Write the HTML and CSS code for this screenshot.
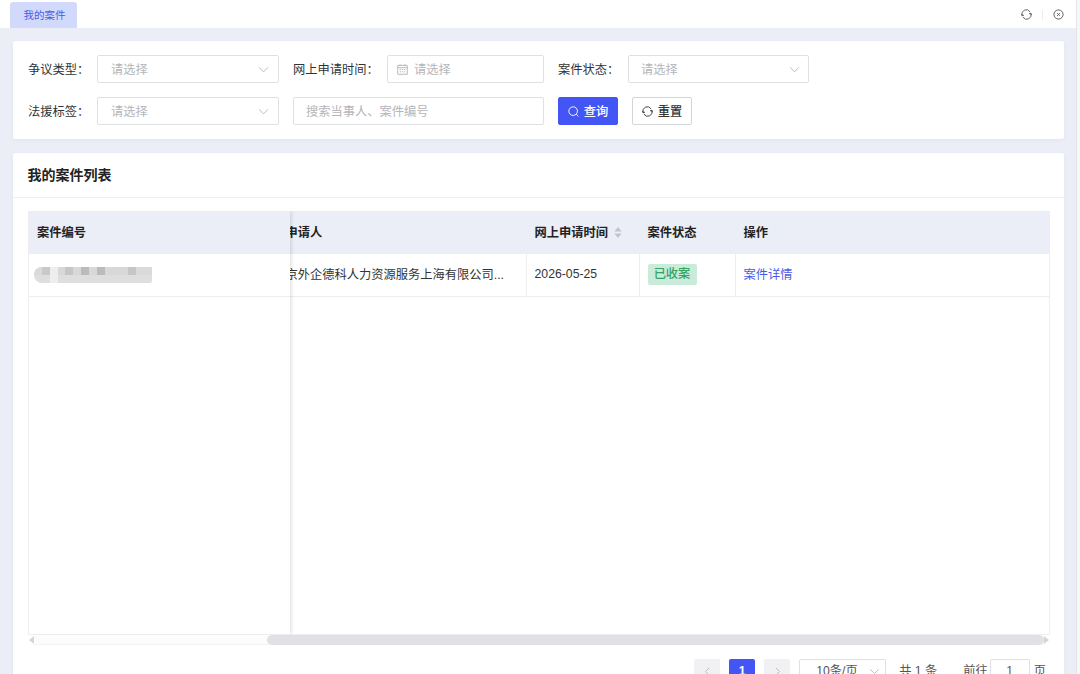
FILE: index.html
```html
<!DOCTYPE html>
<html lang="zh-CN">
<head>
  <meta charset="UTF-8" />
  <title>我的案件</title>
  <link rel="stylesheet" href="styles.css">
</head>
<body>

  <div class="app">
    <header class="tabs-bar">
      <a class="tab">我的案件</a>
      <div class="tab-tools">
        <svg class="icon-tool" viewBox="0 0 12 12"><path d="M1.3 7.4A4.8 4.8 0 0 1 9.9 3.2M10.7 4.6A4.8 4.8 0 0 1 2.1 8.8M.6 5.4l.7 2 1.9-.7M11.4 6.6l-.7-2-1.9.7" /></svg>
        <span class="divider"></span>
        <svg class="icon-tool" viewBox="0 0 12 12"><circle cx="6" cy="6" r="5" /><path d="M4.5 4.5l3 3M7.5 4.5l-3 3" /></svg>
      </div>
    </header>

    <main>
      <form class="card filter">
        <div class="filter-row">
          <div class="field">
            <label>争议类型：</label>
            <div class="control select">请选择<svg class="arrow" viewBox="0 0 12 12"><path d="M1.2 3.6L6 8.6l4.8-5" /></svg></div>
          </div>
          <div class="field">
            <label class="label-wide">网上申请时间：</label>
            <div class="control date">
              <svg class="calendar" viewBox="0 0 12 12"><path d="M.8 1.5h10.4v9.7H.8zM.8 4h10.4M3.4.3v2M8.6.3v2M3 6h1.4M5.3 6h1.4M7.6 6H9M3 8.5h1.4M5.3 8.5h1.4M7.6 8.5H9" /></svg>请选择
            </div>
          </div>
          <div class="field">
            <label>案件状态：</label>
            <div class="control select">请选择<svg class="arrow" viewBox="0 0 12 12"><path d="M1.2 3.6L6 8.6l4.8-5" /></svg></div>
          </div>
        </div>
        <div class="filter-row">
          <div class="field">
            <label>法援标签：</label>
            <div class="control select">请选择<svg class="arrow" viewBox="0 0 12 12"><path d="M1.2 3.6L6 8.6l4.8-5" /></svg></div>
          </div>
          <input class="control search" type="text" placeholder="搜索当事人、案件编号" />
          <button type="button" class="btn btn-primary">
            <svg viewBox="0 0 12 12"><circle cx="5.6" cy="5.6" r="4.7" /><path d="M9 9l2.4 2.4" /></svg>查询
          </button>
          <button type="button" class="btn btn-reset">
            <svg viewBox="0 0 12 12"><path d="M1.3 7.4A4.8 4.8 0 0 1 9.9 3.2M10.7 4.6A4.8 4.8 0 0 1 2.1 8.8M.6 5.4l.7 2 1.9-.7M11.4 6.6l-.7-2-1.9.7" /></svg>重置
          </button>
        </div>
      </form>

      <section class="card list">
        <h2>我的案件列表</h2>

        <div class="table">
          <div class="col col-no">
            <div class="th">案件编号</div>
            <div class="td">
              <div class="mask">
                <i class="m3"></i><i class="m1"></i><i class="m4"></i><i class="m2"></i><i class="m4"></i><i class="m2"></i><i class="m5"></i><i class="m2"></i><i class="m5"></i><i class="m2"></i><i class="m2"></i><i class="m2"></i><i class="m4"></i><i class="m3"></i><i class="m3"></i>
              </div>
            </div>
          </div>
          <div class="col">
            <div class="th scrolled">申请人</div>
            <div class="td scrolled">京外企德科人力资源服务上海有限公司...</div>
          </div>
          <div class="col">
            <div class="th">网上申请时间
              <svg class="sort" viewBox="0 0 8 12"><path d="M4 0l4 4.8H0zM4 12l4-4.8H0z" /></svg>
            </div>
            <div class="td">2026-05-25</div>
          </div>
          <div class="col">
            <div class="th">案件状态</div>
            <div class="td"><span class="tag">已收案</span></div>
          </div>
          <div class="col">
            <div class="th">操作</div>
            <div class="td"><a class="link">案件详情</a></div>
          </div>
        </div>

        <div class="scrollbar">
          <svg viewBox="0 0 5 8"><path d="M5 0v8L0 4z" /></svg>
          <div class="track"><div class="thumb"></div></div>
          <svg viewBox="0 0 5 8"><path d="M0 0v8l5-4z" /></svg>
        </div>

        <div class="pagination">
          <button class="page"><svg viewBox="0 0 12 12"><path d="M7.8 2L3.8 6l4 4" /></svg></button>
          <button class="page active">1</button>
          <button class="page"><svg viewBox="0 0 12 12"><path d="M4.2 2l4 4-4 4" /></svg></button>
          <div class="page-size">10条/页<svg viewBox="0 0 12 12"><path d="M1.5 3.8L6 8.3l4.5-4.5" /></svg></div>
          <span class="total">共 1 条</span>
          <span class="jump">前往<input type="text" value="1" />页</span>
        </div>
      </section>
    </main>
  </div>

</body>
</html>
```
FILE: styles.css
```css
* {
  box-sizing: border-box;
}
body {
  margin: 0;
  height: 100vh;
  overflow: hidden;
  background: #f6f7f8;
  color: #333;
  font-family: "Liberation Sans", "Noto Sans CJK SC", sans-serif;
  font-size: 12.25px;
}
svg {
  fill: none;
  stroke: currentColor;
  flex-shrink: 0;
}
input,
button {
  font: inherit;
}
.app {
  width: 1077px;
  height: 100vh;
  overflow: hidden;
  background: #ebeef6;
  border-right: 1px solid #e4e6ea;
}

/* tabs */
.tabs-bar {
  display: flex;
  justify-content: space-between;
  height: 28px;
  padding: 2px 12px 0 10px;
  background: #fff;
}
.tab {
  width: 67px;
  height: 26px;
  line-height: 26px;
  text-align: center;
  font-size: 10.5px;
  color: #4a5be8;
  background: #d2dafb;
  border-radius: 3px 3px 0 0;
  padding-left: 2px;
}
.tab-tools {
  display: flex;
  align-items: center;
  gap: 10px;
  padding-bottom: 1px;
  color: #555;
}
.icon-tool {
  width: 11px;
  height: 11px;
}
.divider {
  width: 1px;
  height: 10px;
  background: #eee;
}

main {
  padding: 13px 12px 0 13px;
}
.card {
  background: #fff;
  border-radius: 2px;
  box-shadow: 0 1px 4px rgba(0, 0, 0, 0.04);
}

/* filter */
.filter {
  height: 98px;
  padding: 14px 15px;
  margin-bottom: 14px;
}
.filter-row {
  display: flex;
  gap: 14px;
  margin-bottom: 14px;
}
.field {
  display: flex;
  align-items: center;
}
.field label {
  width: 69px;
  white-space: nowrap;
}
.field:nth-child(3) label {
  width: 70px;
}
.field .label-wide {
  width: 94px;
}
.control {
  display: flex;
  align-items: center;
  height: 28px;
  border: 1px solid #dfe0e3;
  border-radius: 2px;
  color: #b4b6ba;
  background: #fff;
}
.select {
  width: 182px;
  justify-content: space-between;
  padding: 0 9px 0 13px;
}
.field:nth-child(3) .select {
  width: 181px;
  padding: 0 8px 0 12px;
}
.arrow {
  width: 11px;
  height: 11px;
}
.date {
  width: 157px;
  padding-left: 9px;
}
.calendar {
  width: 11px;
  height: 11px;
  margin-right: 6px;
}
.search {
  width: 251px;
  padding: 1px 12px 0;
}
.search::placeholder {
  color: #b4b6ba;
}
.btn {
  display: flex;
  align-items: center;
  justify-content: center;
  gap: 5px;
  width: 60px;
  height: 28px;
  padding: 0;
  border-radius: 2px;
  font-weight: 500;
}
.btn svg {
  width: 11px;
  height: 11px;
}
.btn-primary {
  border: 1px solid #4356f5;
  background: #4356f5;
  color: #fff;
}
.btn-reset {
  border: 1px solid #d4d5d8;
  background: #fff;
  color: #333;
}

/* list */
.list {
  height: 560px;
}
.list h2 {
  height: 45px;
  line-height: 44px;
  margin: 0;
  padding-left: 14.5px;
  font-size: 14px;
  color: #222;
  border-bottom: 1px solid #eeeff1;
}
.table {
  display: grid;
  grid-template-columns: 261px 236.5px 113px 96px 1fr;
  height: 424px;
  margin: 13px 14px 0 15px;
  overflow: hidden;
  border: solid #edeef1;
  border-width: 0 1px 1px 1px;
}
.col-no {
  z-index: 1;
  background: #fff;
  box-shadow: 1px 0 4px rgba(0, 0, 0, 0.15);
}
.th,
.td {
  display: flex;
  align-items: center;
  height: 43px;
  padding: 0 0 1px 8px;
  white-space: nowrap;
}
.th {
  font-weight: bold;
  color: #222;
  background: #ebeef6;
}
.td {
  height: 42.5px;
  border: solid #edeef1;
  border-width: 0 1px 1px 0;
}
.col:last-child .td,
.col-no .td {
  border-right: 0;
}
.col-no .td {
  padding-left: 5px;
}
.col .scrolled {
  padding-left: 0;
  text-indent: -4.5px;
}
.sort {
  width: 8px;
  height: 11px;
  margin-left: 6px;
  fill: #c0c4cc;
  stroke: none;
}
.mask {
  display: flex;
  width: 118px;
  height: 16px;
  margin-top: 2px;
  border-radius: 8px 0 2px 8px;
  overflow: hidden;
  background: #dedede;
}
.mask i {
  flex: 1;
  height: 8px;
}
.m1 {
  background: #c9c9c9;
}
.m2 {
  background: #d8d8d8;
}
.m3 {
  background: #dadade;
}
.m4 {
  background: #c6c6c6;
}
.m5 {
  background: #bbb;
}
.mask i:nth-child(3) {
  height: 16px;
  background: #eee;
}
.tag {
  width: 49px;
  height: 21px;
  line-height: 21px;
  text-align: center;
  font-weight: 500;
  color: #35a266;
  background: #c8ecd9;
  border-radius: 2px;
}
.link {
  color: #4a5be8;
}

/* horizontal scrollbar */
.scrollbar {
  display: flex;
  align-items: center;
  height: 10px;
  margin: 0 15px 0 16px;
}
.scrollbar svg {
  width: 5px;
  height: 8px;
  fill: #d5d5da;
  stroke: none;
}
.track {
  flex: 1;
  height: 10px;
  background: #fcfcfc;
  border-bottom: 1px solid #f3f3f3;
}
.thumb {
  width: 777px;
  height: 10px;
  margin-left: auto;
  border-radius: 5px;
  background: #e0e0e6;
}

/* pagination */
.pagination {
  display: flex;
  justify-content: flex-end;
  align-items: center;
  margin: 14px 18px 0 0;
  color: #555;
  line-height: 23px;
}
.page {
  display: flex;
  align-items: center;
  justify-content: center;
  width: 26px;
  height: 25px;
  margin-right: 9px;
  padding: 0;
  border: 0;
  border-radius: 2px;
  background: #f1f1f3;
  color: #b5b7bd;
}
.page svg,
.page-size svg {
  width: 11px;
  height: 11px;
}
.page.active {
  background: #4356f5;
  color: #fff;
  font-weight: bold;
}
.page-size {
  display: flex;
  align-items: center;
  justify-content: space-between;
  width: 87px;
  height: 25px;
  padding: 0 5px 1px 16px;
  border: 1px solid #dfe0e3;
  border-radius: 2px;
}
.page-size svg {
  color: #b4b6ba;
}
.total {
  margin: 0 26px 1px 13px;
}
.jump {
  display: flex;
  align-items: center;
}
.jump input {
  width: 40px;
  height: 25px;
  margin: 0 4px 0 2px;
  padding: 0 0 1px;
  text-align: center;
  color: #555;
  border: 1px solid #dfe0e3;
  border-radius: 2px;
}
```
